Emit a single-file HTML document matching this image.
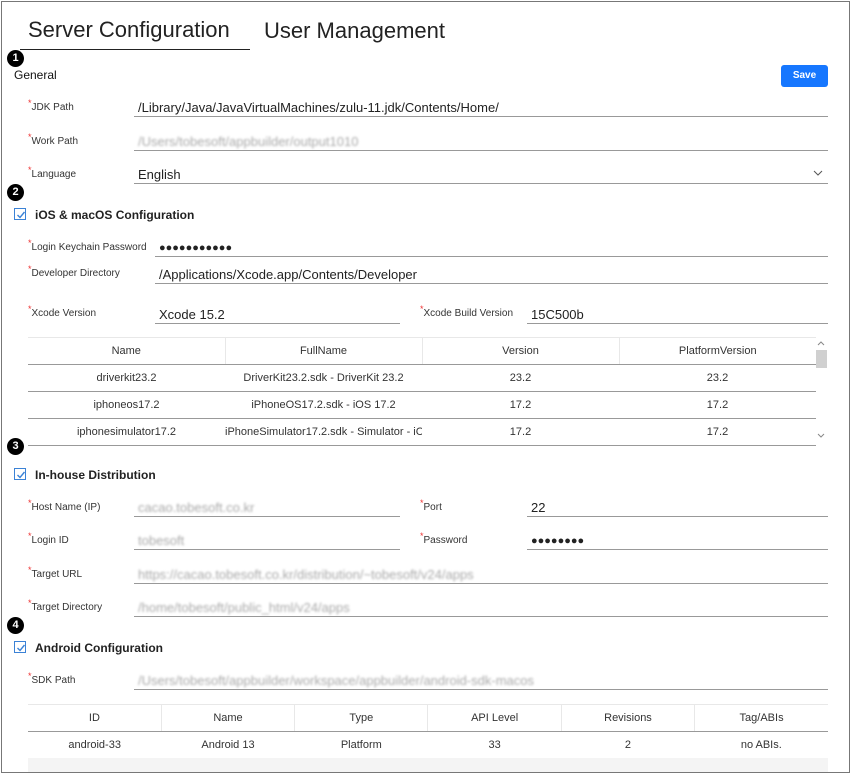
<!DOCTYPE html>
<html><head><meta charset="utf-8"><style>
*{box-sizing:border-box;margin:0;padding:0}
body{width:851px;height:774px;background:#fff;font-family:"Liberation Sans",sans-serif;color:#222;position:relative;overflow:hidden}
.frame{position:absolute;left:1px;top:1px;width:849px;height:772px;border:1px solid #777}
.a{position:absolute;white-space:nowrap}
.lbl{position:absolute;font-size:10px;color:#333;white-space:nowrap}
.lbl:before{content:"*";color:#e33;font-size:9px;position:relative;top:-4px}
.inp{position:absolute;border-bottom:1px solid #999;height:20px;font-size:13px;color:#222;padding-left:4px;line-height:22px;white-space:nowrap;overflow:hidden}
.blur{color:#aaa;filter:blur(1px)}
.badge{position:absolute;width:17px;height:17px;border-radius:50%;background:#000;color:#fff;font-size:11px;font-weight:bold;text-align:center;line-height:17px}
.chk{position:absolute;width:12px;height:12px;border:1px solid #3b82d6;background:#fff}
.chk svg{position:absolute;left:1px;top:1px}
.sec{position:absolute;font-size:12px;font-weight:bold;color:#222;white-space:nowrap}
table{position:absolute;border-collapse:collapse;font-size:11px;color:#333;table-layout:fixed}
td,th{font-weight:normal;text-align:center;height:27px;border-bottom:1px solid #999;overflow:hidden;white-space:nowrap}
th{border-left:1px solid #e8e8e8;border-bottom:1px solid #999}
th:first-child{border-left:none}
tr.h th{border-top:1px solid #e8e8e8}
</style></head><body>
<div class="frame"></div>
<div class="a" style="left:28px;top:17px;font-size:22px;color:#222">Server Configuration</div>
<div class="a" style="left:264px;top:18px;font-size:22px;color:#222">User Management</div>
<div class="a" style="left:20px;top:49px;width:230px;height:1px;background:#222"></div>

<div class="badge" style="left:7px;top:50px">1</div>
<div class="sec" style="left:14px;top:68px;font-weight:normal;color:#111">General</div>
<div class="a" style="left:781px;top:65px;width:47px;height:22px;background:#1677ff;border-radius:3px;color:#fff;font-size:10px;font-weight:bold;text-align:center;line-height:22px">Save</div>

<div class="lbl" style="left:28px;top:102px">JDK Path</div>
<div class="inp" style="left:134px;top:97px;width:694px">/Library/Java/JavaVirtualMachines/zulu-11.jdk/Contents/Home/</div>
<div class="lbl" style="left:28px;top:136px">Work Path</div>
<div class="inp" style="left:134px;top:131px;width:694px"><span class="blur">/Users/tobesoft/appbuilder/output1010</span></div>
<div class="lbl" style="left:28px;top:169px">Language</div>
<div class="inp" style="left:134px;top:164px;width:694px">English</div>
<svg class="a" style="left:813px;top:170px" width="10" height="6"><path d="M1 1L5 5L9 1" stroke="#555" fill="none"/></svg>

<div class="badge" style="left:7px;top:184px">2</div>
<div class="chk" style="left:14px;top:208px"><svg width="10" height="10"><path d="M1.5 5L4 7.5L8.5 2" stroke="#3b82d6" stroke-width="1.4" fill="none"/></svg></div>
<div class="sec" style="left:35px;top:208px">iOS &amp; macOS Configuration</div>

<div class="lbl" style="left:28px;top:242px">Login Keychain Password</div>
<div class="inp" style="left:155px;top:237px;width:673px;font-size:11px">●●●●●●●●●●●</div>
<div class="lbl" style="left:28px;top:268px">Developer Directory</div>
<div class="inp" style="left:155px;top:264px;width:673px">/Applications/Xcode.app/Contents/Developer</div>
<div class="lbl" style="left:28px;top:308px">Xcode Version</div>
<div class="inp" style="left:155px;top:304px;width:245px">Xcode 15.2</div>
<div class="lbl" style="left:420px;top:308px">Xcode Build Version</div>
<div class="inp" style="left:527px;top:304px;width:301px">15C500b</div>

<table style="left:28px;top:337px;width:788px">
<tr class="h"><th>Name</th><th>FullName</th><th>Version</th><th>PlatformVersion</th></tr>
<tr><td>driverkit23.2</td><td>DriverKit23.2.sdk - DriverKit 23.2</td><td>23.2</td><td>23.2</td></tr>
<tr><td>iphoneos17.2</td><td>iPhoneOS17.2.sdk - iOS 17.2</td><td>17.2</td><td>17.2</td></tr>
<tr><td>iphonesimulator17.2</td><td>iPhoneSimulator17.2.sdk - Simulator - iC</td><td>17.2</td><td>17.2</td></tr>
</table>
<div class="a" style="left:816px;top:350px;width:11px;height:18px;background:#d0d0d0"></div>
<svg class="a" style="left:817px;top:340px" width="8" height="6"><path d="M1 5L4 2L7 5" stroke="#888" fill="none"/></svg>
<svg class="a" style="left:817px;top:433px" width="8" height="6"><path d="M1 1L4 4L7 1" stroke="#888" fill="none"/></svg>

<div class="badge" style="left:7px;top:438px">3</div>
<div class="chk" style="left:14px;top:468px"><svg width="10" height="10"><path d="M1.5 5L4 7.5L8.5 2" stroke="#3b82d6" stroke-width="1.4" fill="none"/></svg></div>
<div class="sec" style="left:35px;top:468px">In-house Distribution</div>

<div class="lbl" style="left:28px;top:502px">Host Name (IP)</div>
<div class="inp" style="left:134px;top:497px;width:266px"><span class="blur">cacao.tobesoft.co.kr</span></div>
<div class="lbl" style="left:420px;top:502px">Port</div>
<div class="inp" style="left:527px;top:497px;width:301px">22</div>
<div class="lbl" style="left:28px;top:535px">Login ID</div>
<div class="inp" style="left:134px;top:530px;width:266px"><span class="blur">tobesoft</span></div>
<div class="lbl" style="left:420px;top:535px">Password</div>
<div class="inp" style="left:527px;top:530px;width:301px;font-size:11px">●●●●●●●●</div>
<div class="lbl" style="left:28px;top:569px">Target URL</div>
<div class="inp" style="left:134px;top:564px;width:694px"><span class="blur">https://cacao.tobesoft.co.kr/distribution/~tobesoft/v24/apps</span></div>
<div class="lbl" style="left:28px;top:602px">Target Directory</div>
<div class="inp" style="left:134px;top:597px;width:694px"><span class="blur">/home/tobesoft/public_html/v24/apps</span></div>

<div class="badge" style="left:7px;top:617px">4</div>
<div class="chk" style="left:14px;top:641px"><svg width="10" height="10"><path d="M1.5 5L4 7.5L8.5 2" stroke="#3b82d6" stroke-width="1.4" fill="none"/></svg></div>
<div class="sec" style="left:35px;top:641px">Android Configuration</div>

<div class="lbl" style="left:28px;top:675px">SDK Path</div>
<div class="inp" style="left:134px;top:670px;width:694px"><span class="blur">/Users/tobesoft/appbuilder/workspace/appbuilder/android-sdk-macos</span></div>

<table style="left:28px;top:704px;width:800px">
<tr class="h"><th>ID</th><th>Name</th><th>Type</th><th>API Level</th><th>Revisions</th><th>Tag/ABIs</th></tr>
<tr><td>android-33</td><td>Android 13</td><td>Platform</td><td>33</td><td>2</td><td>no ABIs.</td></tr>
</table>
<div class="a" style="left:28px;top:758px;width:800px;height:14px;background:#f4f4f4"></div>
</body></html>
